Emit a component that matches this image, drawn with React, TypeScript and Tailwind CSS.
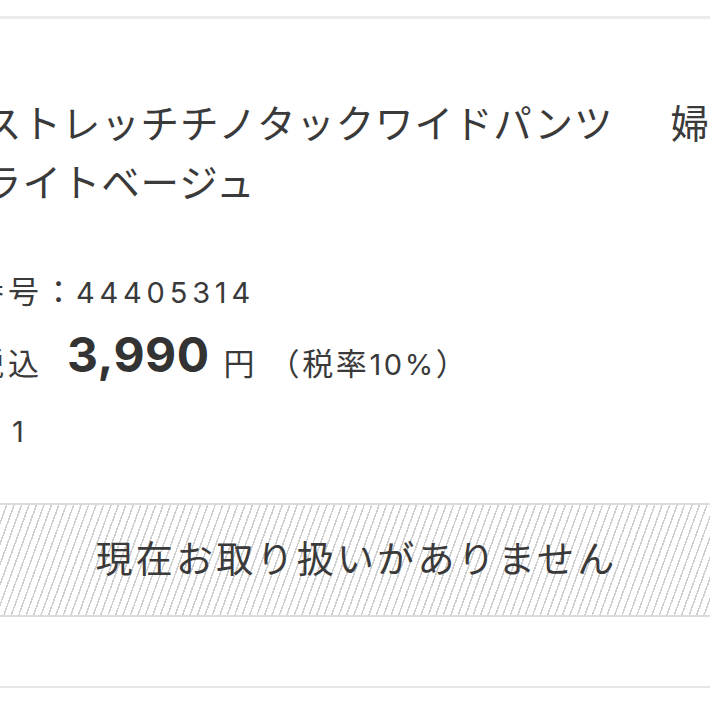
import React from "react";

export default function App() {
  const font = { fontFamily: '"Noto Sans CJK JP", "Noto Sans", sans-serif' };
  const latin = { fontFamily: 'Inter, "Noto Sans CJK JP", sans-serif' };
  return (
    <div className="w-[710px] h-[710px] overflow-hidden bg-white text-[#3a3a3a]" style={font}>
      <div className="h-[16px]" />
      <div className="h-[3px] bg-[#ebebeb]" />
      <div className="pt-[73px] ml-[-17px] text-[38.5px] leading-[59px] whitespace-nowrap tracking-[0.9px]">
        <div className="flex">
          <span>ストレッチチノタックワイドパンツ</span>
          <span className="ml-[57px]">婦人</span>
        </div>
        <div>ライトベージュ</div>
      </div>
      <div className="mt-[44px] flex flex-col whitespace-nowrap text-[31px] leading-[71px]">
        <div className="h-[72px] ml-[-27px] tracking-[4px]">
          <span>番号：</span>
          <span className="ml-[-2px] text-[29px] leading-[31px] tracking-[4.8px]" style={latin}>44405314</span>
        </div>
        <div className="h-[67px] ml-[-27px]">
          <span className="tracking-[4px]">税込</span>
          <span className="relative top-[-3px] ml-[24px] text-[48px] leading-[31px] font-bold tracking-[0.5px] text-[#333]" style={latin}>3,990</span>
          <span className="ml-[14px] tracking-[4px]">円</span>
          <span className="ml-[10px] tracking-[2.6px]">（税率<span className="text-[29px] leading-[31px]" style={latin}>10%</span>）</span>
        </div>
        <div className="h-[71px] ml-[12px]">
          <span className="text-[29px] leading-[31px]" style={latin}>1</span>
        </div>
      </div>
      <div className="mt-[39px] h-[114px] pb-[4px] border-y-2 border-[#dcdcdc] bg-[repeating-linear-gradient(110deg,#ffffff_0px,#ffffff_5.5px,#cfcfcf_5.5px,#cfcfcf_7px)] flex items-center justify-center">
        <span className="text-[37px] tracking-[3.25px] pl-[3px]">現在お取り扱いがありません</span>
      </div>
      <div className="h-[69px]" />
      <div className="h-[2px] bg-[#e6e6e6]" />
    </div>
  );
}
